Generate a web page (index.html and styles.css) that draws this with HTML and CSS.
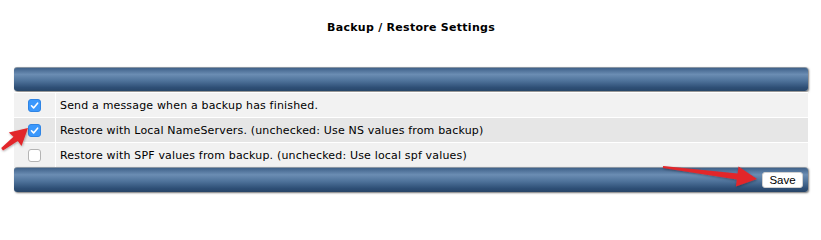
FILE: index.html
```html
<!DOCTYPE html>
<html>
<head>
<meta charset="utf-8">
<link rel="stylesheet" href="styles.css">
</head>
<body>
<div class="page">
  <h1 class="title">Backup / Restore Settings</h1>
  <div class="panel">
    <div class="bar"></div>
    <div class="row row-a">
      <div class="cell-check"><span class="cb on"><svg viewBox="0 0 13 13" width="13" height="13"><path d="M3.5 6.8 L5.6 8.9 L9.6 4.2" fill="none" stroke="#fff" stroke-width="1.6" stroke-linecap="round" stroke-linejoin="round"/></svg></span></div>
      <div class="cell-label">Send a message when a backup has finished.</div>
    </div>
    <div class="row row-b">
      <div class="cell-check"><span class="cb on"><svg viewBox="0 0 13 13" width="13" height="13"><path d="M3.5 6.8 L5.6 8.9 L9.6 4.2" fill="none" stroke="#fff" stroke-width="1.6" stroke-linecap="round" stroke-linejoin="round"/></svg></span></div>
      <div class="cell-label">Restore with Local NameServers. (unchecked: Use NS values from backup)</div>
    </div>
    <div class="row row-c">
      <div class="cell-check"><span class="cb"></span></div>
      <div class="cell-label">Restore with SPF values from backup. (unchecked: Use local spf values)</div>
    </div>
    <div class="bar bar-foot"><button class="save" type="button">Save</button></div>
  </div>
</div>
<svg class="arrows" width="821" height="209" viewBox="0 0 821 209">
  <defs>
    <filter id="sh" x="-20%" y="-20%" width="140%" height="140%">
      <feDropShadow dx="0.5" dy="1" stdDeviation="0.8" flood-color="#000" flood-opacity="0.35"/>
    </filter>
  </defs>
  <polygon filter="url(#sh)" fill="#e2262b" points="28,128 21.5,146 17.8,141 3,150.5 1.2,148 13.5,136.8 8.8,132.5"/>
  <polygon filter="url(#sh)" fill="#e2262b" points="757,179 735.9,186.4 736.8,179.5 662.9,168 663.1,166 737.6,173.5 738.5,166.6"/>
</svg>
</body>
</html>
```
FILE: styles.css
```css
html, body {
  margin: 0;
  padding: 0;
  background: #fff;
}
body {
  position: relative;
  width: 821px;
  height: 209px;
  overflow: hidden;
  font-family: "DejaVu Sans", Verdana, sans-serif;
  font-size: 11px;
  color: #000;
}
.page {
  padding: 0 13px 0 14px;
}
.title {
  margin: 0;
  padding-top: 21px;
  height: 67px;
  box-sizing: border-box;
  font-size: 11px;
  line-height: 13px;
  font-weight: bold;
  text-align: center;
  letter-spacing: 0.28px;
}
.panel {
  width: 794px;
}
.bar {
  height: 24px;
  border-radius: 3px;
  background: linear-gradient(to bottom, #3f6189 0%, #6b8db3 28%, #4f739b 55%, #2e4f76 85%, #284668 100%);
  box-shadow: 1px 1px 2px rgba(0, 0, 0, 0.55);
  border-top: 1px solid #8a96a3;
  box-sizing: border-box;
}
.bar-foot {
  height: 25px;
  display: flex;
  align-items: center;
  justify-content: flex-end;
  padding-right: 5px;
}
.row {
  display: flex;
  height: 24px;
  border-top: 1px solid #fff;
}
.row-a { background: #f2f2f2; margin-top: 1px; }
.row-b { background: #e6e6e6; }
.row-c { background: #f1f1f1; }
.cell-check {
  width: 41px;
  border-right: 1px solid #fff;
  display: flex;
  align-items: center;
  justify-content: center;
}
.cell-label {
  flex: 1;
  display: flex;
  align-items: center;
  padding-left: 4px;
  line-height: 13px;
  letter-spacing: 0.17px;
}
.cb {
  display: block;
  width: 13px;
  height: 13px;
  box-sizing: border-box;
  border-radius: 3px;
  background: #fff;
  border: 1px solid #b4b4b4;
}
.cb.on {
  background: #3b98fc;
  border: 1px solid #2f84e4;
}
.cb svg {
  display: block;
  margin: -1px;
}
.save {
  font-family: "Liberation Sans", Arial, sans-serif;
  font-size: 11.5px;
  line-height: 14px;
  height: 16px;
  width: 41px;
  padding: 0;
  background: #fff;
  border: 1px solid #d0d0d0;
  border-radius: 3px;
  color: #000;
}
.arrows {
  position: absolute;
  left: 0;
  top: 0;
  pointer-events: none;
}
```
